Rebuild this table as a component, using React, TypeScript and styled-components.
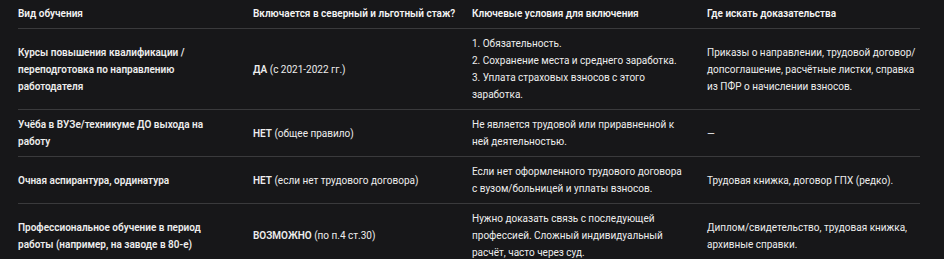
import { createGlobalStyle, styled } from "styled-components";

const GlobalStyle = createGlobalStyle`
    html, body {
        margin: 0;
        padding: 0;
        background: #171719;
    }
    body {
        font-family: Roboto, "Noto Sans", sans-serif;
        color: #ededed;
    }
`;

const Page = styled.div`
    padding: 0 24px 0 18px;
    height: 259px;
    overflow: hidden;
`;

const Table = styled.table`
    width: 902px;
    border-collapse: collapse;
    table-layout: fixed;
    font-size: 10px;
    line-height: 17px;
`;

const Col = styled.col<{ $w: number }>`
    width: ${(p) => p.$w}px;
`;

const Head = styled.th`
    text-align: left;
    font-weight: 600;
    color: #f4f4f4;
    padding: 5px 12px 6px 0;
    border-bottom: 1px solid #3a3a3c;
    vertical-align: middle;

    &:last-child {
        padding-right: 0;
    }
`;

const Row = styled.tr`
    border-bottom: 1px solid #3a3a3c;

    &:last-child {
        border-bottom: none;
    }
`;

const Cell = styled.td<{ $strong?: boolean }>`
    padding: 6px 24px 6px 0;
    vertical-align: middle;
    font-weight: ${(p) => (p.$strong ? 600 : 400)};

    &:last-child {
        padding-right: 0;
    }
`;

const B = styled.strong`
    font-weight: 600;
`;

export default function App() {
    return (
        <Page>
            <GlobalStyle />
            <Table>
                <colgroup>
                    <Col $w={235} />
                    <Col $w={219} />
                    <Col $w={235} />
                    <Col $w={213} />
                </colgroup>
                <thead>
                    <tr>
                        <Head>Вид обучения</Head>
                        <Head>Включается в северный и льготный стаж?</Head>
                        <Head>Ключевые условия для включения</Head>
                        <Head>Где искать доказательства</Head>
                    </tr>
                </thead>
                <tbody>
                    <Row>
                        <Cell $strong>Курсы повышения квалификации / переподготовка по направлению работодателя</Cell>
                        <Cell>
                            <B>ДА</B> (с 2021-2022 гг.)
                        </Cell>
                        <Cell>
                            1. Обязательность.
                            <br />
                            2. Сохранение места и среднего заработка.
                            <br />
                            3. Уплата страховых взносов с этого заработка.
                        </Cell>
                        <Cell>
                            Приказы о направлении, трудовой договор/
                            <wbr />
                            допсоглашение, расчётные листки, справка из ПФР о начислении взносов.
                        </Cell>
                    </Row>
                    <Row>
                        <Cell $strong>Учёба в ВУЗе/техникуме ДО выхода на работу</Cell>
                        <Cell>
                            <B>НЕТ</B> (общее правило)
                        </Cell>
                        <Cell>Не является трудовой или приравненной к ней деятельностью.</Cell>
                        <Cell>—</Cell>
                    </Row>
                    <Row>
                        <Cell $strong>Очная аспирантура, ординатура</Cell>
                        <Cell>
                            <B>НЕТ</B> (если нет трудового договора)
                        </Cell>
                        <Cell>Если нет оформленного трудового договора с вузом/больницей и уплаты взносов.</Cell>
                        <Cell>Трудовая книжка, договор ГПХ (редко).</Cell>
                    </Row>
                    <Row>
                        <Cell $strong>Профессиональное обучение в период работы (например, на заводе в 80-е)</Cell>
                        <Cell>
                            <B>ВОЗМОЖНО</B> (по п.4 ст.30)
                        </Cell>
                        <Cell>
                            Нужно доказать связь с последующей профессией. Сложный индивидуальный расчёт, часто через
                            суд.
                        </Cell>
                        <Cell>Диплом/свидетельство, трудовая книжка, архивные справки.</Cell>
                    </Row>
                </tbody>
            </Table>
        </Page>
    );
}
